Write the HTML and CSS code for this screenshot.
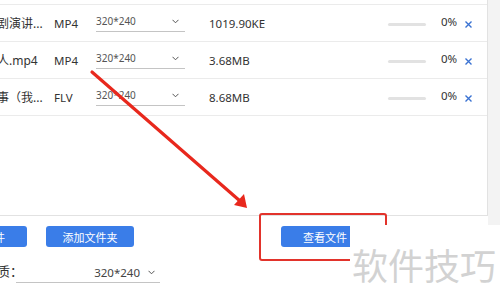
FILE: index.html
```html
<!DOCTYPE html>
<html lang="zh-CN">
<head>
    <meta charset="UTF-8">
    <meta name="viewport" content="width=device-width, initial-scale=1.0">
    <link rel="stylesheet" href="styles.css">
    <title>格式转换</title>
</head>
<body>
    <div class="page">
        <div class="main">
            <div class="panel">
                <div class="file-list">
                    <div class="row">
                        <span class="name">剧演讲...</span>
                        <span class="type">MP4</span>
                        <div class="select">
                            <span>320*240</span>
                            <svg class="chev" width="7" height="5" viewBox="0 0 7 5"><path d="M0.5 0.8 L3.5 3.8 L6.5 0.8" fill="none" stroke="#555" stroke-width="1"/></svg>
                        </div>
                        <span class="size">1019.90KE</span>
                        <div class="bar"></div>
                        <span class="pct">0%</span>
                        <svg class="del" width="7" height="7" viewBox="0 0 7 7"><path d="M0.5 0.5 L6.5 6.5 M6.5 0.5 L0.5 6.5" stroke="#3a72d2" stroke-width="1.4"/></svg>
                    </div>
                    <div class="row">
                        <span class="name">人.mp4</span>
                        <span class="type">MP4</span>
                        <div class="select">
                            <span>320*240</span>
                            <svg class="chev" width="7" height="5" viewBox="0 0 7 5"><path d="M0.5 0.8 L3.5 3.8 L6.5 0.8" fill="none" stroke="#555" stroke-width="1"/></svg>
                        </div>
                        <span class="size">3.68MB</span>
                        <div class="bar"></div>
                        <span class="pct">0%</span>
                        <svg class="del" width="7" height="7" viewBox="0 0 7 7"><path d="M0.5 0.5 L6.5 6.5 M6.5 0.5 L0.5 6.5" stroke="#3a72d2" stroke-width="1.4"/></svg>
                    </div>
                    <div class="row">
                        <span class="name">事（我...</span>
                        <span class="type">FLV</span>
                        <div class="select">
                            <span>320*240</span>
                            <svg class="chev" width="7" height="5" viewBox="0 0 7 5"><path d="M0.5 0.8 L3.5 3.8 L6.5 0.8" fill="none" stroke="#555" stroke-width="1"/></svg>
                        </div>
                        <span class="size">8.68MB</span>
                        <div class="bar"></div>
                        <span class="pct">0%</span>
                        <svg class="del" width="7" height="7" viewBox="0 0 7 7"><path d="M0.5 0.5 L6.5 6.5 M6.5 0.5 L0.5 6.5" stroke="#3a72d2" stroke-width="1.4"/></svg>
                    </div>
                </div>
            </div>

            <div class="toolbar">
                <button type="button" class="btn btn-first">添加文件</button>
                <button type="button" class="btn">添加文件夹</button>
                <button type="button" class="btn btn-view">查看文件</button>
            </div>

            <div class="settings">
                <span class="label">画质：</span>
                <div class="select select-wide">
                    <span>320*240</span>
                    <svg class="chev" width="7" height="5" viewBox="0 0 7 5"><path d="M0.5 0.8 L3.5 3.8 L6.5 0.8" fill="none" stroke="#555" stroke-width="1"/></svg>
                </div>
            </div>
        </div>
        <div class="aside"></div>

        <!-- annotation layer -->
        <div class="mark-box"></div>
        <svg class="arrow" width="500" height="298" viewBox="0 0 500 298">
            <line x1="92" y1="72" x2="240" y2="201" stroke="#e8281d" stroke-width="3.2" stroke-linecap="round"/>
            <polygon points="247,208 234,205 244,194" fill="#e8281d"/>
        </svg>
        <div class="watermark">软件技巧</div>
    </div>
</body>
</html>
```

FILE: styles.css
```css
body {
    margin: 0;
    font-family: "Noto Sans", "Noto Sans CJK SC", sans-serif;
    color: #333;
    background: #fff;
}

.page {
    position: relative;
    display: flex;
    width: 500px;
    height: 298px;
    overflow: hidden;
}

.main {
    width: 488px;
    flex-shrink: 0;
}

.aside {
    flex: 1;
    background: #f3f3f3;
}

.panel {
    height: 216px;
    border-right: 1px solid #e2e2e2;
    border-bottom: 1px solid #e2e2e2;
    padding-top: 4px;
    box-sizing: border-box;
}

.row {
    display: flex;
    align-items: center;
    height: 36px;
    border-top: 1px solid #ebebeb;
    font-size: 11.5px;
}

.row:last-child {
    border-bottom: 1px solid #ebebeb;
}

.name {
    width: 57px;
    margin-left: -3px;
    font-size: 12px;
    white-space: nowrap;
    flex-shrink: 0;
}

.type {
    width: 42px;
    flex-shrink: 0;
}

.select {
    display: flex;
    justify-content: space-between;
    align-items: flex-start;
    width: 89px;
    height: 15px;
    border-bottom: 1px solid #c4c4c4;
    font-size: 10px;
    line-height: 11px;
    color: #555;
    margin-top: 1px;
    flex-shrink: 0;
}

.select .chev {
    margin: 3px 6px 0 0;
}

.size {
    flex: 1;
    margin-left: 24px;
}

.bar {
    width: 38px;
    height: 3px;
    border-radius: 2px;
    background: #e2e2e2;
    margin-top: 2px;
}

.pct {
    width: 16px;
    margin-left: 15px;
    margin-top: -3px;
}

.del {
    margin: 2px 15px 0 8px;
}

.toolbar {
    display: flex;
    margin-top: 10px;
}

.btn {
    width: 88px;
    height: 21px;
    border: none;
    border-radius: 3px;
    background: #3a7de8;
    color: #fff;
    font-family: "Noto Sans CJK SC", sans-serif;
    font-size: 11px;
    padding: 0;
}

.btn-first {
    margin-left: -61px;
    margin-right: 19px;
}

.btn-view {
    margin-left: 147px;
}

.settings {
    display: flex;
    align-items: flex-end;
    margin-top: 14px;
    height: 22px;
}

.label {
    width: 32px;
    margin-left: -16px;
    font-size: 13px;
    white-space: nowrap;
    line-height: 16px;
    padding-bottom: 4px;
}

.select-wide {
    width: 144px;
    height: 16px;
    justify-content: flex-end;
    font-size: 11.5px;
    line-height: 13px;
    color: #444;
}

.select-wide .chev {
    margin: 4px 5px 0 8px;
}

.mark-box {
    position: absolute;
    left: 259px;
    top: 213px;
    width: 128px;
    height: 48px;
    box-sizing: border-box;
    border: 2px solid #e2332b;
    border-radius: 3px;
}

.arrow {
    position: absolute;
    left: 0;
    top: 0;
}

.watermark {
    position: absolute;
    left: 350px;
    top: 225px;
    right: 0;
    bottom: 0;
    background: #fff;
    padding: 21px 0 0 2px;
    font-family: "Noto Sans CJK SC", sans-serif;
    font-size: 36px;
    line-height: 36px;
    color: #d2d2d2;
    white-space: nowrap;
}
```
